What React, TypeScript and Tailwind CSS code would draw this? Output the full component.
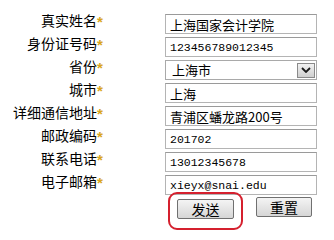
import { useState } from 'react'

/** 联系信息表单 */
const cjk = '[font-family:"Noto_Sans_CJK_SC",sans-serif]'

type Row = { label: string; value: string; mono?: boolean; select?: boolean }

const rows: Row[] = [
  { label: '真实姓名', value: '上海国家会计学院' },
  { label: '身份证号码', value: '123456789012345', mono: true },
  { label: '省份', value: '上海市', select: true },
  { label: '城市', value: '上海' },
  { label: '详细通信地址', value: '青浦区蟠龙路200号' },
  { label: '邮政编码', value: '201702', mono: true },
  { label: '联系电话', value: '13012345678', mono: true },
  { label: '电子邮箱', value: 'xieyx@snai.edu', mono: true },
]

const Field = ({ row }: { row: Row }) => {
  const [value, setValue] = useState(row.value)
  if (row.select) {
    return (
      <div className="ml-[61px] mt-[2px] flex h-[20px] w-[152px] items-center border border-[#a9a9a9] bg-white">
        <span className={`flex-1 pl-[6px] text-[13px] leading-[18px] text-black ${cjk}`}>{value}</span>
        <span className="mr-[1px] flex h-[15px] w-[18px] items-center justify-center border border-[#8a8a8a] bg-gradient-to-b from-[#f2f2f2] to-[#cfcfcf]">
          <svg width="10" height="6" viewBox="0 0 10 6">
            <path d="M1 1 L5 5 L9 1" fill="none" stroke="#1a1a1a" strokeWidth="1.8" />
          </svg>
        </span>
      </div>
    )
  }
  return (
    <input
      value={value}
      onChange={e => setValue(e.target.value)}
      className={`ml-[61px] mt-[2px] h-[20px] w-[152px] border border-[#b4b4b4] border-t-[#9a9a9a] bg-white px-[4px] text-black outline-none ${
        row.mono
          ? 'text-[11.5px] [font-family:"Liberation_Mono",monospace]'
          : `text-[13px] ${cjk}`
      }`}
    />
  )
}

const App = () => {
  return (
    <div className="h-[240px] w-[334px] bg-white pt-[12px]">
      {rows.map(row => (
        <div key={row.label} className="flex h-[23px] items-start">
          <div className="flex w-[104px] justify-end">
            <span className={`text-[14px] leading-[16px] text-black ${cjk}`}>{row.label}</span>
            <span className="w-[7px] text-[15px] font-bold leading-[20px] text-[#d9a520] [font-family:'Liberation_Sans',sans-serif]">*</span>
          </div>
          <Field row={row} />
        </div>
      ))}
      <div className="mt-[1px] flex">
        <div className="relative ml-[177px]">
          <button className={`h-[20px] w-[57px] rounded-[2px] border border-[#707070] bg-gradient-to-b from-[#f4f4f4] to-[#d6d6d6] text-[14px] leading-[18px] text-black ${cjk}`}>
            发送
          </button>
          {/* 红色圈注 */}
          <div className="pointer-events-none absolute -bottom-[9px] -left-[9px] -right-[9px] -top-[5px] rounded-[9px] border-2 border-[#d5202e]" />
        </div>
        <button className={`ml-[22px] h-[20px] w-[56px] rounded-[2px] border border-[#707070] bg-gradient-to-b from-[#f4f4f4] to-[#d6d6d6] text-[14px] leading-[18px] text-black ${cjk}`}>
          重置
        </button>
      </div>
    </div>
  )
}

export default App
